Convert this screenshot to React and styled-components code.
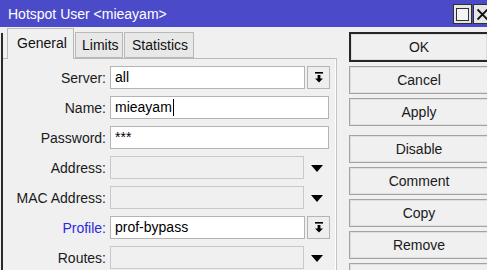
import React from "react";
import styled, { createGlobalStyle } from "styled-components";

const Global = createGlobalStyle`
  html, body { margin: 0; padding: 0; background: #f0f0f0; }
  body { font-family: "Liberation Sans", Arial, sans-serif; }
  #root { width: 487px; height: 270px; overflow: hidden; }
`;

const Window = styled.div`
  width: 487px;
  height: 270px;
  display: flex;
  flex-direction: column;
  background: #f0f0f0;
  overflow: hidden;
`;

const TitleBar = styled.div`
  height: 27px;
  flex: none;
  background: #4b4bc9;
  display: flex;
  align-items: center;
  padding-left: 8px;
`;

const TitleText = styled.div`
  flex: 1;
  color: #ffffff;
  font-size: 14px;
  line-height: 16px;
`;

const TitleButtons = styled.div`
  display: flex;
  align-items: flex-start;
  align-self: flex-start;
  margin-top: 4px;
  gap: 1px;
  margin-right: -5px;
`;

const TitleButton = styled.div`
  width: 19px;
  height: 20px;
  box-sizing: border-box;
  background: #e6e6e6;
  border: 1px solid #303030;
  display: flex;
  align-items: center;
  justify-content: center;
`;

const Body = styled.div`
  flex: 1;
  display: flex;
  padding-top: 1px;
  min-height: 0;
`;

const FrameEdge = styled.div`
  width: 2px;
  margin-left: 1px;
  margin-top: 5px;
  background: #2a2a2a;
  flex: none;
`;

const TabArea = styled.div`
  width: 334px;
  display: flex;
  flex-direction: column;
  flex: none;
`;

const TabRow = styled.div`
  display: flex;
  align-items: flex-end;
  padding-left: 4px;
  gap: 1px;
  height: 30px;
  position: relative;
  z-index: 1;
`;

const Tab = styled.div`
  box-sizing: border-box;
  height: ${(p) => (p.$active ? "31px" : "26px")};
  margin-bottom: ${(p) => (p.$active ? "-1px" : "0")};
  width: ${(p) => p.$w}px;
  padding-left: ${(p) => p.$pl}px;
  padding-top: ${(p) => (p.$active ? "6px" : "4px")};
  border: 1px solid #b9b9b9;
  border-bottom: ${(p) => (p.$active ? "none" : "1px solid #b9b9b9")};
  background: ${(p) => (p.$active ? "#f0f0f0" : "#e8e8e8")};
  font-size: 14px;
  line-height: 16px;
  color: #111;
`;

const Panel = styled.div`
  flex: 1;
  border-top: 1px solid #b9b9b9;
  border-right: 1px solid #c4c4c4;
  box-shadow: inset -1px 0 0 #ffffff;
  padding: 7px 0 0 1px;
`;

const Form = styled.div`
  display: grid;
  grid-template-columns: 102px auto;
  column-gap: 4px;
  row-gap: 7px;
  align-items: center;
  grid-auto-rows: 23px;
`;

const Label = styled.div`
  text-align: right;
  font-size: 14px;
  line-height: 16px;
  color: ${(p) => (p.$link ? "#2a2ae0" : "#1a1a1a")};
  white-space: nowrap;
`;

const Field = styled.div`
  display: flex;
  align-items: center;
  height: 23px;
`;

const Input = styled.div`
  box-sizing: border-box;
  height: 23px;
  width: ${(p) => p.$w}px;
  background: ${(p) => (p.$disabled ? "#f0f0f0" : "#ffffff")};
  border: 1px solid ${(p) => (p.$disabled ? "#c8c8c8" : "#b4b4b4")};
  padding-left: 4px;
  font-size: 14px;
  line-height: 21px;
  color: #000;
  display: flex;
  align-items: ${(p) => (p.$top ? "flex-start" : "center")};
  white-space: nowrap;
`;

const Caret = styled.span`
  display: inline-block;
  width: 1px;
  height: 17px;
  background: #000;
  margin-left: 1px;
`;

const DropButton = styled.div`
  box-sizing: border-box;
  width: 23px;
  height: 23px;
  margin-left: 2px;
  background: #eeeeee;
  border: 1px solid #b4b4b4;
  display: flex;
  align-items: center;
  justify-content: center;
`;

const Triangle = styled.div`
  width: 0;
  height: 0;
  margin-left: 7px;
  margin-top: 1px;
  border-left: 6px solid transparent;
  border-right: 6px solid transparent;
  border-top: 7px solid #000;
`;

const ButtonColumn = styled.div`
  flex: 1;
  display: flex;
  flex-direction: column;
  padding-left: 12px;
  padding-top: 4px;
  gap: 4px;
  margin-right: -2px;
`;

const Button = styled.div`
  box-sizing: border-box;
  height: ${(p) => (p.$default ? "30px" : "28px")};
  margin-top: ${(p) => p.$mt || 0}px;
  background: #f0f0f0;
  border: ${(p) => (p.$default ? "2px solid #262626" : "1px solid #a3a3a3")};
  box-shadow: inset 0 0 0 1px #dedede;
  display: flex;
  align-items: center;
  justify-content: center;
  font-size: 14px;
  color: #1a1a1a;
  flex: none;
`;

const DropIcon = () => (
  <svg width="10" height="11" viewBox="0 0 10 11">
    <rect x="1" y="0" width="8" height="1.6" fill="#000" />
    <rect x="3.6" y="3" width="2.8" height="4" fill="#000" />
    <polygon points="1,6.5 9,6.5 5,10.5" fill="#000" />
  </svg>
);

const fields = [
  { label: "Server", kind: "drop", value: "all" },
  { label: "Name", kind: "text", value: "mieayam", caret: true },
  { label: "Password", kind: "text", value: "***", top: true },
  { label: "Address", kind: "tri" },
  { label: "MAC Address", kind: "tri" },
  { label: "Profile", kind: "drop", value: "prof-bypass", link: true },
  { label: "Routes", kind: "tri" },
];

const buttons = [
  { t: "OK", def: true },
  { t: "Cancel" },
  { t: "Apply" },
  { t: "Disable", mt: 5 },
  { t: "Comment" },
  { t: "Copy" },
  { t: "Remove" },
  { t: "" },
];

export default function App() {
  return (
    <>
      <Global />
      <Window>
        <TitleBar>
          <TitleText>Hotspot User &lt;mieayam&gt;</TitleText>
          <TitleButtons>
            <TitleButton>
              <svg width="13" height="13" viewBox="0 0 13 13">
                <rect x="0.5" y="0.5" width="12" height="12" fill="#f4f4f4" stroke="#303030" />
              </svg>
            </TitleButton>
            <TitleButton>
              <svg width="13" height="13" viewBox="0 0 13 13">
                <path d="M1.5 1.5 L11.5 11.5 M11.5 1.5 L1.5 11.5" stroke="#111" strokeWidth="1.8" />
              </svg>
            </TitleButton>
          </TitleButtons>
        </TitleBar>
        <Body>
          <FrameEdge />
          <TabArea>
            <TabRow>
              <Tab $active $w={67} $pl={9}>General</Tab>
              <Tab $w={48} $pl={6}>Limits</Tab>
              <Tab $w={70} $pl={7}>Statistics</Tab>
            </TabRow>
            <Panel>
              <Form>
                {fields.map((f) => (
                  <React.Fragment key={f.label}>
                    <Label $link={f.link}>{f.label}:</Label>
                    <Field>
                      {f.kind === "drop" && (
                        <>
                          <Input $w={195}>{f.value}</Input>
                          <DropButton>
                            <DropIcon />
                          </DropButton>
                        </>
                      )}
                      {f.kind === "text" && (
                        <Input $w={219} $top={f.top}>
                          {f.value}
                          {f.caret && <Caret />}
                        </Input>
                      )}
                      {f.kind === "tri" && (
                        <>
                          <Input $w={194} $disabled />
                          <Triangle />
                        </>
                      )}
                    </Field>
                  </React.Fragment>
                ))}
              </Form>
            </Panel>
          </TabArea>
          <ButtonColumn>
            {buttons.map((b, i) => (
              <Button key={i} $default={b.def} $mt={b.mt}>
                {b.t}
              </Button>
            ))}
          </ButtonColumn>
        </Body>
      </Window>
    </>
  );
}
